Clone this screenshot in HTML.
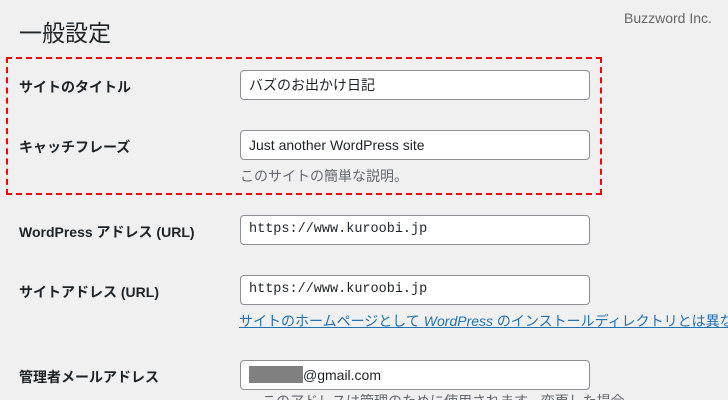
<!DOCTYPE html>
<html><head><meta charset="utf-8"><style>
html,body{margin:0;width:728px;height:400px;overflow:hidden}
body{background:#f0f0f1;position:relative;font-family:"Liberation Sans","Noto Sans CJK JP",sans-serif;color:#1d2327}
.wrap{position:absolute;left:0;top:0;width:728px;height:400px;overflow:hidden}
.a{position:absolute;white-space:nowrap}
h1{position:absolute;left:19px;top:14px;margin:0;font-size:23px;font-weight:400;color:#1d2327;font-family:"Noto Sans CJK JP",sans-serif}
.lab{position:absolute;left:19px;font-size:14px;font-weight:700}
.in{position:absolute;left:240px;width:340px;height:28px;background:#fff;border:1px solid #8c8f94;border-radius:4px;font-size:14px;line-height:28px;padding-left:8px}
.mono{font-family:"Liberation Mono",monospace;font-size:13.5px}
</style></head><body><div class="wrap">
<h1>一般設定</h1>
<div class="a" style="left:624px;top:10px;font-size:14px;color:#666">Buzzword Inc.</div>
<div class="a" style="left:6px;top:57px;width:592px;height:134px;border:2px dashed #f00"></div>
<div class="lab" style="top:77px">サイトのタイトル</div>
<div class="in" style="top:70px">バズのお出かけ日記</div>
<div class="lab" style="top:137px">キャッチフレーズ</div>
<div class="in" style="top:130px">Just another WordPress site</div>
<div class="a" style="left:240px;top:166px;font-size:14px;color:#646970">このサイトの簡単な説明。</div>
<div class="lab" style="top:222px">WordPress アドレス (URL)</div>
<div class="in mono" style="top:215px">https://www.kuroobi.jp</div>
<div class="lab" style="top:282px">サイトアドレス (URL)</div>
<div class="in mono" style="top:275px">https://www.kuroobi.jp</div>
<div class="a" style="left:239px;top:311px;font-size:14px;color:#2271b1;text-decoration:underline">サイトのホームページとして <i>WordPress</i> のインストールディレクトリとは異なる場所</div>
<div class="lab" style="top:367px">管理者メールアドレス</div>
<div class="in" style="top:360px"><span style="display:inline-block;width:54px;height:17px;background:#808080;vertical-align:-3px"></span>@gmail.com</div>
<div class="a" style="left:262px;top:391px;font-size:14px;color:#646970">このアドレスは管理のために使用されます。変更した場合</div>
</div></body></html>
